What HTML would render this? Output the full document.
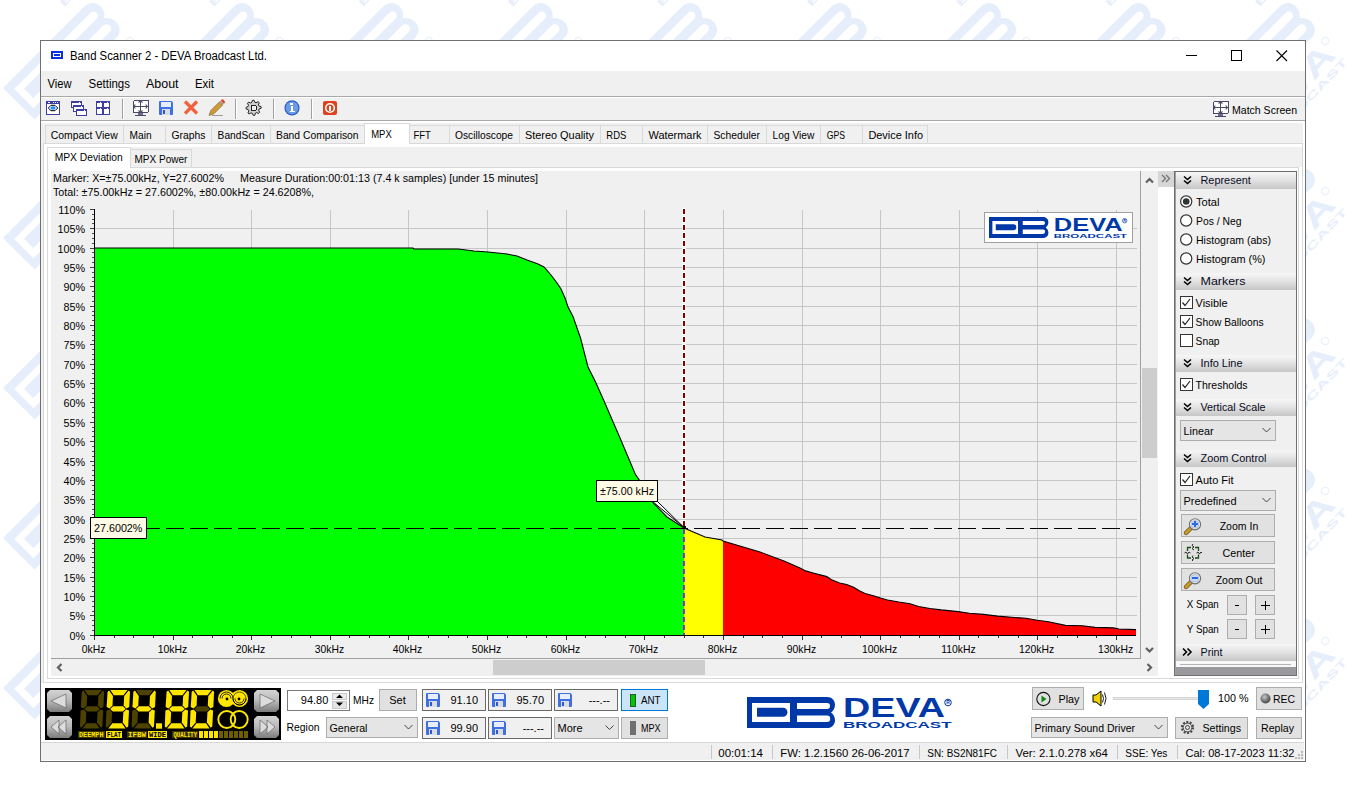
<!DOCTYPE html>
<html><head><meta charset="utf-8"><style>
html,body{margin:0;padding:0;width:1346px;height:802px;overflow:hidden;background:#fff}
svg{display:block;font-family:"Liberation Sans",sans-serif}
rect{shape-rendering:crispEdges}
</style></head><body>
<svg width="1346" height="802" viewBox="0 0 1346 802">
<defs><clipPath id="wmclip"><rect x="0" y="0" width="1346" height="720"/></clipPath><g id="wm"><path transform="translate(3,88) rotate(-45) scale(1.44)" fill-rule="evenodd" fill="#e6eefb" d="M0,0 H80 C85,0 88,3.5 88,7.8 C88,11.5 86,14 84,15.5 C86,17 88,19.5 88,23.2 C88,27.5 85,31 80,31 H0 Z M5,6 H43 V25 H5 Z M10,10.7 H36 A4.5,4.5 0 0 1 36,19.7 H10 Z M50,6 H80 A3,3 0 0 1 80,12 H50 Z M50,18.6 H80 A3.2,3.2 0 0 1 80,25 H50 Z"/><g transform="translate(130,41) rotate(-47)"><text x="-3" y="19" font-size="32" font-weight="bold" fill="#e6eefb" text-anchor="end" textLength="128" lengthAdjust="spacingAndGlyphs">DEVA</text><text x="0" y="31" font-size="10" font-weight="bold" fill="#e6eefb" text-anchor="end" textLength="130" lengthAdjust="spacingAndGlyphs">BROADCAST</text><circle cx="0" cy="0" r="3.6" fill="none" stroke="#e6eefb" stroke-width="1"/></g></g></defs>
<g clip-path="url(#wmclip)">
<use href="#wm" x="-149.4" y="-150"/>
<use href="#wm" x="0.0" y="-150"/>
<use href="#wm" x="149.4" y="-150"/>
<use href="#wm" x="298.8" y="-150"/>
<use href="#wm" x="448.2" y="-150"/>
<use href="#wm" x="597.6" y="-150"/>
<use href="#wm" x="747.0" y="-150"/>
<use href="#wm" x="896.4" y="-150"/>
<use href="#wm" x="1045.8" y="-150"/>
<use href="#wm" x="1195.2" y="-150"/>
<use href="#wm" x="1344.6" y="-150"/>
<use href="#wm" x="-149.4" y="0"/>
<use href="#wm" x="0.0" y="0"/>
<use href="#wm" x="149.4" y="0"/>
<use href="#wm" x="298.8" y="0"/>
<use href="#wm" x="448.2" y="0"/>
<use href="#wm" x="597.6" y="0"/>
<use href="#wm" x="747.0" y="0"/>
<use href="#wm" x="896.4" y="0"/>
<use href="#wm" x="1045.8" y="0"/>
<use href="#wm" x="1195.2" y="0"/>
<use href="#wm" x="1344.6" y="0"/>
<use href="#wm" x="-149.4" y="150"/>
<use href="#wm" x="0.0" y="150"/>
<use href="#wm" x="149.4" y="150"/>
<use href="#wm" x="298.8" y="150"/>
<use href="#wm" x="448.2" y="150"/>
<use href="#wm" x="597.6" y="150"/>
<use href="#wm" x="747.0" y="150"/>
<use href="#wm" x="896.4" y="150"/>
<use href="#wm" x="1045.8" y="150"/>
<use href="#wm" x="1195.2" y="150"/>
<use href="#wm" x="1344.6" y="150"/>
<use href="#wm" x="-149.4" y="300"/>
<use href="#wm" x="0.0" y="300"/>
<use href="#wm" x="149.4" y="300"/>
<use href="#wm" x="298.8" y="300"/>
<use href="#wm" x="448.2" y="300"/>
<use href="#wm" x="597.6" y="300"/>
<use href="#wm" x="747.0" y="300"/>
<use href="#wm" x="896.4" y="300"/>
<use href="#wm" x="1045.8" y="300"/>
<use href="#wm" x="1195.2" y="300"/>
<use href="#wm" x="1344.6" y="300"/>
<use href="#wm" x="-149.4" y="450"/>
<use href="#wm" x="0.0" y="450"/>
<use href="#wm" x="149.4" y="450"/>
<use href="#wm" x="298.8" y="450"/>
<use href="#wm" x="448.2" y="450"/>
<use href="#wm" x="597.6" y="450"/>
<use href="#wm" x="747.0" y="450"/>
<use href="#wm" x="896.4" y="450"/>
<use href="#wm" x="1045.8" y="450"/>
<use href="#wm" x="1195.2" y="450"/>
<use href="#wm" x="1344.6" y="450"/>
<use href="#wm" x="-149.4" y="600"/>
<use href="#wm" x="0.0" y="600"/>
<use href="#wm" x="149.4" y="600"/>
<use href="#wm" x="298.8" y="600"/>
<use href="#wm" x="448.2" y="600"/>
<use href="#wm" x="597.6" y="600"/>
<use href="#wm" x="747.0" y="600"/>
<use href="#wm" x="896.4" y="600"/>
<use href="#wm" x="1045.8" y="600"/>
<use href="#wm" x="1195.2" y="600"/>
<use href="#wm" x="1344.6" y="600"/>
<use href="#wm" x="-149.4" y="750"/>
<use href="#wm" x="0.0" y="750"/>
<use href="#wm" x="149.4" y="750"/>
<use href="#wm" x="298.8" y="750"/>
<use href="#wm" x="448.2" y="750"/>
<use href="#wm" x="597.6" y="750"/>
<use href="#wm" x="747.0" y="750"/>
<use href="#wm" x="896.4" y="750"/>
<use href="#wm" x="1045.8" y="750"/>
<use href="#wm" x="1195.2" y="750"/>
<use href="#wm" x="1344.6" y="750"/>
</g>
<rect x="40" y="40" width="1266" height="722" fill="#ffffff" />
<rect x="40" y="40" width="1266" height="1" fill="#707070" />
<rect x="40" y="761" width="1266" height="1" fill="#707070" />
<rect x="40" y="40" width="1" height="722" fill="#707070" />
<rect x="1305" y="40" width="1" height="722" fill="#707070" />
<rect x="51" y="51" width="12" height="8" fill="#0a2fe0" />
<rect x="53" y="53" width="8" height="4" fill="#ffffff" />
<rect x="54" y="54" width="6" height="2" fill="#0a2fe0" />
<text x="70" y="59.5" font-size="12" fill="#000" textLength="197" lengthAdjust="spacingAndGlyphs">Band Scanner 2 - DEVA Broadcast Ltd.</text>
<rect x="1186" y="55" width="11" height="1" fill="#000" />
<rect x="1231" y="50" width="11" height="1" fill="#000" />
<rect x="1231" y="60" width="11" height="1" fill="#000" />
<rect x="1231" y="50" width="1" height="11" fill="#000" />
<rect x="1241" y="50" width="1" height="11" fill="#000" />
<path d="M1276.5,50.5 L1287,61 M1287,50.5 L1276.5,61" stroke="#000" stroke-width="1.1"/>
<rect x="41" y="71" width="1264" height="25" fill="#f0f0f0" />
<text x="47.5" y="88" font-size="12" fill="#000" textLength="24" lengthAdjust="spacingAndGlyphs">View</text>
<text x="88.5" y="88" font-size="12" fill="#000" textLength="41.5" lengthAdjust="spacingAndGlyphs">Settings</text>
<text x="146" y="88" font-size="12" fill="#000" textLength="32.5" lengthAdjust="spacingAndGlyphs">About</text>
<text x="195" y="88" font-size="12" fill="#000" textLength="19" lengthAdjust="spacingAndGlyphs">Exit</text>
<rect x="41" y="96" width="1264" height="1" fill="#a9a9a9" />
<rect x="41" y="97" width="1264" height="1" fill="#ffffff" />
<rect x="41" y="98" width="1264" height="22" fill="#f0f0f0" />
<rect x="41" y="120" width="1264" height="1" fill="#a9a9a9" />
<rect x="41" y="121" width="1264" height="2" fill="#ffffff" />
<rect x="122" y="99" width="1" height="20" fill="#a0a0a0" />
<rect x="123" y="99" width="1" height="20" fill="#ffffff" />
<rect x="235" y="99" width="1" height="20" fill="#a0a0a0" />
<rect x="236" y="99" width="1" height="20" fill="#ffffff" />
<rect x="273" y="99" width="1" height="20" fill="#a0a0a0" />
<rect x="274" y="99" width="1" height="20" fill="#ffffff" />
<rect x="311" y="99" width="1" height="20" fill="#a0a0a0" />
<rect x="312" y="99" width="1" height="20" fill="#ffffff" />
<rect x="46" y="101" width="14" height="14" fill="#fff" />
<rect x="46" y="101" width="14" height="1" fill="#3d3da6" />
<rect x="46" y="114" width="14" height="1" fill="#3d3da6" />
<rect x="46" y="101" width="1" height="14" fill="#3d3da6" />
<rect x="59" y="101" width="1" height="14" fill="#3d3da6" />
<rect x="46" y="101" width="14" height="3" fill="#3d3da6" />
<rect x="48" y="102" width="2" height="1" fill="#fff" />
<rect x="53" y="102" width="1" height="1" fill="#fff" />
<rect x="55" y="102" width="1" height="1" fill="#fff" />
<rect x="57" y="102" width="1" height="1" fill="#fff" />
<path d="M48.3,108 L51,105.3 L55,105.3 L57.7,108 L55,110.7 L51,110.7 Z" fill="#fff" stroke="#000" stroke-width="1"/>
<ellipse cx="53" cy="108" rx="2.6" ry="1.8" fill="#1a8cff"/>
<rect x="71" y="101" width="11" height="7" fill="#fff" />
<rect x="71" y="101" width="11" height="1" fill="#3d3da6" />
<rect x="71" y="107" width="11" height="1" fill="#3d3da6" />
<rect x="71" y="101" width="1" height="7" fill="#3d3da6" />
<rect x="81" y="101" width="1" height="7" fill="#3d3da6" />
<rect x="71" y="101" width="11" height="2" fill="#3d3da6" />
<rect x="79" y="102" width="1" height="1" fill="#fff" />
<rect x="73" y="105" width="11" height="7" fill="#fff" />
<rect x="73" y="105" width="11" height="1" fill="#3d3da6" />
<rect x="73" y="111" width="11" height="1" fill="#3d3da6" />
<rect x="73" y="105" width="1" height="7" fill="#3d3da6" />
<rect x="83" y="105" width="1" height="7" fill="#3d3da6" />
<rect x="73" y="105" width="11" height="2" fill="#3d3da6" />
<rect x="81" y="106" width="1" height="1" fill="#fff" />
<rect x="76" y="109" width="11" height="7" fill="#fff" />
<rect x="76" y="109" width="11" height="1" fill="#3d3da6" />
<rect x="76" y="115" width="11" height="1" fill="#3d3da6" />
<rect x="76" y="109" width="1" height="7" fill="#3d3da6" />
<rect x="86" y="109" width="1" height="7" fill="#3d3da6" />
<rect x="76" y="109" width="11" height="2" fill="#3d3da6" />
<rect x="84" y="110" width="1" height="1" fill="#fff" />
<rect x="96" y="101" width="14" height="14" fill="#fff" />
<rect x="96" y="101" width="14" height="1" fill="#3d3da6" />
<rect x="96" y="114" width="14" height="1" fill="#3d3da6" />
<rect x="96" y="101" width="1" height="14" fill="#3d3da6" />
<rect x="109" y="101" width="1" height="14" fill="#3d3da6" />
<rect x="102" y="101" width="2" height="14" fill="#3d3da6" />
<rect x="96" y="107" width="14" height="2" fill="#3d3da6" />
<rect x="96" y="101" width="14" height="2" fill="#3d3da6" />
<rect x="100" y="102" width="1" height="1" fill="#fff" />
<rect x="107" y="102" width="1" height="1" fill="#fff" />
<rect x="100" y="108" width="1" height="1" fill="#fff" />
<rect x="107" y="108" width="1" height="1" fill="#fff" />
<rect x="133.5" y="100.5" width="15" height="12" rx="1.5" fill="#fff" stroke="#4a4a66" stroke-width="1"/>
<rect x="140" y="101" width="1" height="12" fill="#4a4a66" />
<rect x="134" y="106" width="14" height="1" fill="#4a4a66" />
<path d="M138.5,102.5 L140.5,100.8 L142.5,102.5 M138.5,110.5 L140.5,112.2 L142.5,110.5 M135.3,104.5 L133.8,106.5 L135.3,108.5 M145.7,104.5 L147.2,106.5 L145.7,108.5" fill="none" stroke="#4a4a66" stroke-width="1.1"/>
<rect x="138" y="113" width="5" height="2" fill="#6a6a90" />
<rect x="135" y="115" width="11" height="1" fill="#4a4a66" />
<path d="M159,102 q0,-1 1,-1 h11.5 l1.5,1.5 v11.5 q0,1 -1,1 h-12 q-1,0 -1,-1 z" fill="#3f6fe0"/>
<rect x="161" y="102" width="10" height="5" fill="#e6eeff" />
<rect x="162" y="109" width="8" height="6" fill="#d8dce4" />
<rect x="163" y="110" width="2" height="4" fill="#3058c8" />
<path d="M185,101.5 L197,113.5 M197,101.5 L185,113.5" stroke="#f4603c" stroke-width="3.2"/>
<path d="M209,115.5 L210.8,110.5 L219.5,101.8 L222.7,105 L214,113.7 Z" fill="#cf9a3a" stroke="#7a5a20" stroke-width="0.6"/>
<path d="M219.5,101.8 L222.7,105 L224,103.7 L220.8,100.5 Z" fill="#a0a0a0"/>
<path d="M220.8,100.5 L224,103.7 L225,102.5 Q224.5,99.5 222,99.3 Z" fill="#e8402a"/>
<rect x="212" y="115" width="11" height="1" fill="#9a9a9a" />
<polygon points="261.12,106.68 261.19,108.17 259.03,109.16 258.66,110.19 259.70,112.33 258.70,113.43 256.48,112.60 255.49,113.07 254.72,115.32 253.23,115.39 252.24,113.23 251.21,112.86 249.07,113.90 247.97,112.90 248.80,110.68 248.33,109.69 246.08,108.92 246.01,107.43 248.17,106.44 248.54,105.41 247.50,103.27 248.50,102.17 250.72,103.00 251.71,102.53 252.48,100.28 253.97,100.21 254.96,102.37 255.99,102.74 258.13,101.70 259.23,102.70 258.40,104.92 258.87,105.91" fill="#d0d0d0" stroke="#222" stroke-width="1"/>
<rect x="251.1" y="105.3" width="5" height="5" rx="1" fill="#f0f0f0" stroke="#222" stroke-width="1"/>
<circle cx="292" cy="107.8" r="7.6" fill="#2b5fc8"/><circle cx="292" cy="107.8" r="6.4" fill="#6b9ae6"/>
<rect x="290" y="103" width="3" height="2" fill="#fff" />
<rect x="290.5" y="106" width="2.5" height="5" fill="#fff" />
<rect x="289.5" y="110.5" width="5" height="1.5" fill="#fff" />
<rect x="323" y="101" width="14" height="14" rx="2" fill="#e0401e" style="shape-rendering:auto"/>
<circle cx="330" cy="108" r="4.3" fill="none" stroke="#fff" stroke-width="1.6"/>
<rect x="329" y="105.5" width="2" height="5" fill="#fff" />
<rect x="1213.5" y="101.5" width="15" height="12" rx="1.5" fill="#fff" stroke="#4a4a66" stroke-width="1"/>
<rect x="1220" y="102" width="1" height="12" fill="#4a4a66" />
<rect x="1214" y="107" width="14" height="1" fill="#4a4a66" />
<path d="M1218.5,103.5 L1220.5,101.8 L1222.5,103.5 M1218.5,111.5 L1220.5,113.2 L1222.5,111.5 M1215.3,105.5 L1213.8,107.5 L1215.3,109.5 M1225.7,105.5 L1227.2,107.5 L1225.7,109.5" fill="none" stroke="#4a4a66" stroke-width="1.1"/>
<rect x="1218" y="114" width="5" height="2" fill="#6a6a90" />
<rect x="1215" y="116" width="11" height="1" fill="#4a4a66" />
<text x="1232" y="113.5" font-size="11" fill="#000" textLength="65" lengthAdjust="spacingAndGlyphs">Match Screen</text>
<rect x="41" y="123" width="1264" height="620" fill="#f0f0f0" />
<rect x="1303" y="123" width="2" height="620" fill="#ffffff" />
<rect x="43" y="143" width="1260" height="540" fill="#ffffff" />
<rect x="43" y="143" width="1260" height="1" fill="#d9d9d9" />
<rect x="43" y="682" width="1260" height="1" fill="#d9d9d9" />
<rect x="43" y="143" width="1" height="540" fill="#d9d9d9" />
<rect x="1302" y="143" width="1" height="540" fill="#d9d9d9" />
<rect x="45" y="125" width="79" height="19" fill="#f0f0f0" />
<rect x="45" y="125" width="79" height="1" fill="#d9d9d9" />
<rect x="45" y="143" width="79" height="1" fill="#d9d9d9" />
<rect x="45" y="125" width="1" height="19" fill="#d9d9d9" />
<rect x="123" y="125" width="1" height="19" fill="#d9d9d9" />
<rect x="123" y="125" width="43" height="19" fill="#f0f0f0" />
<rect x="123" y="125" width="43" height="1" fill="#d9d9d9" />
<rect x="123" y="143" width="43" height="1" fill="#d9d9d9" />
<rect x="123" y="125" width="1" height="19" fill="#d9d9d9" />
<rect x="165" y="125" width="1" height="19" fill="#d9d9d9" />
<rect x="165" y="125" width="47" height="19" fill="#f0f0f0" />
<rect x="165" y="125" width="47" height="1" fill="#d9d9d9" />
<rect x="165" y="143" width="47" height="1" fill="#d9d9d9" />
<rect x="165" y="125" width="1" height="19" fill="#d9d9d9" />
<rect x="211" y="125" width="1" height="19" fill="#d9d9d9" />
<rect x="211" y="125" width="60" height="19" fill="#f0f0f0" />
<rect x="211" y="125" width="60" height="1" fill="#d9d9d9" />
<rect x="211" y="143" width="60" height="1" fill="#d9d9d9" />
<rect x="211" y="125" width="1" height="19" fill="#d9d9d9" />
<rect x="270" y="125" width="1" height="19" fill="#d9d9d9" />
<rect x="270" y="125" width="95" height="19" fill="#f0f0f0" />
<rect x="270" y="125" width="95" height="1" fill="#d9d9d9" />
<rect x="270" y="143" width="95" height="1" fill="#d9d9d9" />
<rect x="270" y="125" width="1" height="19" fill="#d9d9d9" />
<rect x="364" y="125" width="1" height="19" fill="#d9d9d9" />
<rect x="409" y="125" width="41" height="19" fill="#f0f0f0" />
<rect x="409" y="125" width="41" height="1" fill="#d9d9d9" />
<rect x="409" y="143" width="41" height="1" fill="#d9d9d9" />
<rect x="409" y="125" width="1" height="19" fill="#d9d9d9" />
<rect x="449" y="125" width="1" height="19" fill="#d9d9d9" />
<rect x="449" y="125" width="71" height="19" fill="#f0f0f0" />
<rect x="449" y="125" width="71" height="1" fill="#d9d9d9" />
<rect x="449" y="143" width="71" height="1" fill="#d9d9d9" />
<rect x="449" y="125" width="1" height="19" fill="#d9d9d9" />
<rect x="519" y="125" width="1" height="19" fill="#d9d9d9" />
<rect x="519" y="125" width="82" height="19" fill="#f0f0f0" />
<rect x="519" y="125" width="82" height="1" fill="#d9d9d9" />
<rect x="519" y="143" width="82" height="1" fill="#d9d9d9" />
<rect x="519" y="125" width="1" height="19" fill="#d9d9d9" />
<rect x="600" y="125" width="1" height="19" fill="#d9d9d9" />
<rect x="600" y="125" width="43" height="19" fill="#f0f0f0" />
<rect x="600" y="125" width="43" height="1" fill="#d9d9d9" />
<rect x="600" y="143" width="43" height="1" fill="#d9d9d9" />
<rect x="600" y="125" width="1" height="19" fill="#d9d9d9" />
<rect x="642" y="125" width="1" height="19" fill="#d9d9d9" />
<rect x="642" y="125" width="66" height="19" fill="#f0f0f0" />
<rect x="642" y="125" width="66" height="1" fill="#d9d9d9" />
<rect x="642" y="143" width="66" height="1" fill="#d9d9d9" />
<rect x="642" y="125" width="1" height="19" fill="#d9d9d9" />
<rect x="707" y="125" width="1" height="19" fill="#d9d9d9" />
<rect x="707" y="125" width="60" height="19" fill="#f0f0f0" />
<rect x="707" y="125" width="60" height="1" fill="#d9d9d9" />
<rect x="707" y="143" width="60" height="1" fill="#d9d9d9" />
<rect x="707" y="125" width="1" height="19" fill="#d9d9d9" />
<rect x="766" y="125" width="1" height="19" fill="#d9d9d9" />
<rect x="766" y="125" width="55" height="19" fill="#f0f0f0" />
<rect x="766" y="125" width="55" height="1" fill="#d9d9d9" />
<rect x="766" y="143" width="55" height="1" fill="#d9d9d9" />
<rect x="766" y="125" width="1" height="19" fill="#d9d9d9" />
<rect x="820" y="125" width="1" height="19" fill="#d9d9d9" />
<rect x="820" y="125" width="43" height="19" fill="#f0f0f0" />
<rect x="820" y="125" width="43" height="1" fill="#d9d9d9" />
<rect x="820" y="143" width="43" height="1" fill="#d9d9d9" />
<rect x="820" y="125" width="1" height="19" fill="#d9d9d9" />
<rect x="862" y="125" width="1" height="19" fill="#d9d9d9" />
<rect x="862" y="125" width="66" height="19" fill="#f0f0f0" />
<rect x="862" y="125" width="66" height="1" fill="#d9d9d9" />
<rect x="862" y="143" width="66" height="1" fill="#d9d9d9" />
<rect x="862" y="125" width="1" height="19" fill="#d9d9d9" />
<rect x="927" y="125" width="1" height="19" fill="#d9d9d9" />
<text x="50.7" y="139" font-size="11" fill="#000" textLength="67" lengthAdjust="spacingAndGlyphs">Compact View</text>
<text x="129.6" y="139" font-size="11" fill="#000" textLength="22" lengthAdjust="spacingAndGlyphs">Main</text>
<text x="171.5" y="139" font-size="11" fill="#000" textLength="34" lengthAdjust="spacingAndGlyphs">Graphs</text>
<text x="217.6" y="139" font-size="11" fill="#000" textLength="47" lengthAdjust="spacingAndGlyphs">BandScan</text>
<text x="276" y="139" font-size="11" fill="#000" textLength="82.6" lengthAdjust="spacingAndGlyphs">Band Comparison</text>
<rect x="364" y="123" width="46" height="21" fill="#ffffff" />
<rect x="364" y="123" width="46" height="1" fill="#d9d9d9" />
<rect x="364" y="143" width="46" height="1" fill="#d9d9d9" />
<rect x="364" y="123" width="1" height="21" fill="#d9d9d9" />
<rect x="409" y="123" width="1" height="21" fill="#d9d9d9" />
<rect x="365" y="143" width="44" height="1" fill="#ffffff" />
<text x="371.2" y="137.5" font-size="11" fill="#000" textLength="20.5" lengthAdjust="spacingAndGlyphs">MPX</text>
<text x="413.5" y="139" font-size="11" fill="#000" textLength="17.4" lengthAdjust="spacingAndGlyphs">FFT</text>
<text x="455" y="139" font-size="11" fill="#000" textLength="58" lengthAdjust="spacingAndGlyphs">Oscilloscope</text>
<text x="525" y="139" font-size="11" fill="#000" textLength="69" lengthAdjust="spacingAndGlyphs">Stereo Quality</text>
<text x="606.3" y="139" font-size="11" fill="#000" textLength="20" lengthAdjust="spacingAndGlyphs">RDS</text>
<text x="648.5" y="139" font-size="11" fill="#000" textLength="53" lengthAdjust="spacingAndGlyphs">Watermark</text>
<text x="713.5" y="139" font-size="11" fill="#000" textLength="46.4" lengthAdjust="spacingAndGlyphs">Scheduler</text>
<text x="772.6" y="139" font-size="11" fill="#000" textLength="41.7" lengthAdjust="spacingAndGlyphs">Log View</text>
<text x="826.8" y="139" font-size="11" fill="#000" textLength="18.3" lengthAdjust="spacingAndGlyphs">GPS</text>
<text x="868.4" y="139" font-size="11" fill="#000" textLength="54.6" lengthAdjust="spacingAndGlyphs">Device Info</text>
<rect x="47" y="147" width="1255" height="20" fill="#f0f0f0" />
<rect x="47" y="167" width="1252" height="512" fill="#ffffff" />
<rect x="47" y="167" width="1252" height="1" fill="#d9d9d9" />
<rect x="47" y="678" width="1252" height="1" fill="#d9d9d9" />
<rect x="47" y="167" width="1" height="512" fill="#d9d9d9" />
<rect x="1298" y="167" width="1" height="512" fill="#d9d9d9" />
<rect x="47" y="147" width="84" height="21" fill="#ffffff" />
<rect x="47" y="147" width="84" height="1" fill="#d9d9d9" />
<rect x="47" y="167" width="84" height="1" fill="#d9d9d9" />
<rect x="47" y="147" width="1" height="21" fill="#d9d9d9" />
<rect x="130" y="147" width="1" height="21" fill="#d9d9d9" />
<rect x="48" y="167" width="82" height="1" fill="#ffffff" />
<rect x="130" y="149" width="62" height="19" fill="#f0f0f0" />
<rect x="130" y="149" width="62" height="1" fill="#d9d9d9" />
<rect x="130" y="167" width="62" height="1" fill="#d9d9d9" />
<rect x="130" y="149" width="1" height="19" fill="#d9d9d9" />
<rect x="191" y="149" width="1" height="19" fill="#d9d9d9" />
<text x="54.7" y="160.7" font-size="11" fill="#000" textLength="68" lengthAdjust="spacingAndGlyphs">MPX Deviation</text>
<text x="134.4" y="163" font-size="11" fill="#000" textLength="53" lengthAdjust="spacingAndGlyphs">MPX Power</text>
<rect x="51" y="171" width="1090" height="488" fill="#f0f0f0" />
<rect x="1140" y="171" width="1" height="488" fill="#a0a0a0" />
<rect x="51" y="658" width="1090" height="1" fill="#a0a0a0" />
<text x="53" y="182" font-size="10.7" fill="#000" textLength="171" lengthAdjust="spacingAndGlyphs">Marker: X=±75.00kHz, Y=27.6002%</text>
<text x="240" y="182" font-size="10.7" fill="#000" textLength="298" lengthAdjust="spacingAndGlyphs">Measure Duration:00:01:13 (7.4 k samples) [under 15 minutes]</text>
<text x="53" y="196" font-size="10.7" fill="#000" textLength="261" lengthAdjust="spacingAndGlyphs">Total: ±75.00kHz = 27.6002%, ±80.00kHz = 24.6208%,</text>
<rect x="173" y="210" width="1" height="425" fill="#c6c6c6" />
<rect x="251" y="210" width="1" height="425" fill="#c6c6c6" />
<rect x="330" y="210" width="1" height="425" fill="#c6c6c6" />
<rect x="408" y="210" width="1" height="425" fill="#c6c6c6" />
<rect x="487" y="210" width="1" height="425" fill="#c6c6c6" />
<rect x="566" y="210" width="1" height="425" fill="#c6c6c6" />
<rect x="644" y="210" width="1" height="425" fill="#c6c6c6" />
<rect x="723" y="210" width="1" height="425" fill="#c6c6c6" />
<rect x="802" y="210" width="1" height="425" fill="#c6c6c6" />
<rect x="880" y="210" width="1" height="425" fill="#c6c6c6" />
<rect x="959" y="210" width="1" height="425" fill="#c6c6c6" />
<rect x="1037" y="210" width="1" height="425" fill="#c6c6c6" />
<rect x="1116" y="210" width="1" height="425" fill="#c6c6c6" />
<rect x="95" y="615" width="1042" height="1" fill="#c6c6c6" />
<rect x="95" y="596" width="1042" height="1" fill="#c6c6c6" />
<rect x="95" y="577" width="1042" height="1" fill="#c6c6c6" />
<rect x="95" y="557" width="1042" height="1" fill="#c6c6c6" />
<rect x="95" y="538" width="1042" height="1" fill="#c6c6c6" />
<rect x="95" y="519" width="1042" height="1" fill="#c6c6c6" />
<rect x="95" y="499" width="1042" height="1" fill="#c6c6c6" />
<rect x="95" y="480" width="1042" height="1" fill="#c6c6c6" />
<rect x="95" y="461" width="1042" height="1" fill="#c6c6c6" />
<rect x="95" y="441" width="1042" height="1" fill="#c6c6c6" />
<rect x="95" y="422" width="1042" height="1" fill="#c6c6c6" />
<rect x="95" y="402" width="1042" height="1" fill="#c6c6c6" />
<rect x="95" y="383" width="1042" height="1" fill="#c6c6c6" />
<rect x="95" y="364" width="1042" height="1" fill="#c6c6c6" />
<rect x="95" y="344" width="1042" height="1" fill="#c6c6c6" />
<rect x="95" y="325" width="1042" height="1" fill="#c6c6c6" />
<rect x="95" y="306" width="1042" height="1" fill="#c6c6c6" />
<rect x="95" y="286" width="1042" height="1" fill="#c6c6c6" />
<rect x="95" y="267" width="1042" height="1" fill="#c6c6c6" />
<rect x="95" y="248" width="1042" height="1" fill="#c6c6c6" />
<rect x="95" y="228" width="1042" height="1" fill="#c6c6c6" />
<path d="M95,635 L95.0,248.0 L413.0,248.0 L414.0,249.0 L458.0,249.0 L474.0,251.0 L488.0,252.0 L507.0,254.0 L517.0,256.0 L527.0,260.0 L538.0,264.0 L544.0,267.0 L551.0,275.0 L557.0,283.0 L561.0,289.0 L565.0,298.0 L568.0,307.0 L573.0,316.5 L577.0,328.0 L580.5,338.0 L588.0,367.0 L596.0,383.0 L604.0,401.0 L612.0,419.5 L620.0,438.0 L627.6,456.0 L635.5,474.6 L640.0,481.0 L646.0,492.0 L653.8,503.4 L667.0,517.0 L684.0,528.0 L684,635 Z" fill="#00ff00"/>
<path d="M684,635 L684.0,528.0 L705.0,537.0 L722.0,540.0 L723.0,541.0 L723,635 Z" fill="#ffff00"/>
<path d="M723,635 L723.0,541.0 L760.0,552.0 L784.0,561.0 L800.0,568.1 L805.6,570.9 L814.0,573.2 L821.0,575.1 L826.8,576.6 L831.0,579.4 L839.5,583.0 L846.6,584.5 L853.6,587.3 L859.3,590.7 L865.0,593.5 L873.4,595.8 L880.5,598.0 L887.5,600.0 L898.8,602.0 L910.0,603.7 L918.6,606.5 L929.9,608.5 L941.2,609.9 L958.0,611.6 L969.4,613.3 L983.5,614.4 L997.6,616.1 L1014.6,617.5 L1025.9,618.3 L1037.2,620.3 L1048.4,621.7 L1065.4,625.4 L1082.3,625.7 L1095.0,627.4 L1113.4,627.9 L1119.0,629.0 L1136.0,629.6 L1136,635 Z" fill="#ff0000"/>
<path d="M95.0,248.0 L413.0,248.0 L414.0,249.0 L458.0,249.0 L474.0,251.0 L488.0,252.0 L507.0,254.0 L517.0,256.0 L527.0,260.0 L538.0,264.0 L544.0,267.0 L551.0,275.0 L557.0,283.0 L561.0,289.0 L565.0,298.0 L568.0,307.0 L573.0,316.5 L577.0,328.0 L580.5,338.0 L588.0,367.0 L596.0,383.0 L604.0,401.0 L612.0,419.5 L620.0,438.0 L627.6,456.0 L635.5,474.6 L640.0,481.0 L646.0,492.0 L653.8,503.4 L667.0,517.0 L684.0,528.0 L705.0,537.0 L722.0,540.0 L723.0,541.0 L760.0,552.0 L784.0,561.0 L800.0,568.1 L805.6,570.9 L814.0,573.2 L821.0,575.1 L826.8,576.6 L831.0,579.4 L839.5,583.0 L846.6,584.5 L853.6,587.3 L859.3,590.7 L865.0,593.5 L873.4,595.8 L880.5,598.0 L887.5,600.0 L898.8,602.0 L910.0,603.7 L918.6,606.5 L929.9,608.5 L941.2,609.9 L958.0,611.6 L969.4,613.3 L983.5,614.4 L997.6,616.1 L1014.6,617.5 L1025.9,618.3 L1037.2,620.3 L1048.4,621.7 L1065.4,625.4 L1082.3,625.7 L1095.0,627.4 L1113.4,627.9 L1119.0,629.0 L1136.0,629.6" fill="none" stroke="#000" stroke-width="1.1"/>
<rect x="94" y="209" width="1" height="427" fill="#000" />
<rect x="94" y="635" width="1042" height="1" fill="#000" />
<rect x="90" y="635" width="4" height="1" fill="#404040" />
<rect x="92" y="630" width="2" height="1" fill="#505050" />
<rect x="92" y="625" width="2" height="1" fill="#505050" />
<rect x="92" y="620" width="2" height="1" fill="#505050" />
<rect x="90" y="615" width="4" height="1" fill="#404040" />
<rect x="92" y="611" width="2" height="1" fill="#505050" />
<rect x="92" y="606" width="2" height="1" fill="#505050" />
<rect x="92" y="601" width="2" height="1" fill="#505050" />
<rect x="90" y="596" width="4" height="1" fill="#404040" />
<rect x="92" y="591" width="2" height="1" fill="#505050" />
<rect x="92" y="586" width="2" height="1" fill="#505050" />
<rect x="92" y="581" width="2" height="1" fill="#505050" />
<rect x="90" y="577" width="4" height="1" fill="#404040" />
<rect x="92" y="572" width="2" height="1" fill="#505050" />
<rect x="92" y="567" width="2" height="1" fill="#505050" />
<rect x="92" y="562" width="2" height="1" fill="#505050" />
<rect x="90" y="557" width="4" height="1" fill="#404040" />
<rect x="92" y="552" width="2" height="1" fill="#505050" />
<rect x="92" y="548" width="2" height="1" fill="#505050" />
<rect x="92" y="543" width="2" height="1" fill="#505050" />
<rect x="90" y="538" width="4" height="1" fill="#404040" />
<rect x="92" y="533" width="2" height="1" fill="#505050" />
<rect x="92" y="528" width="2" height="1" fill="#505050" />
<rect x="92" y="523" width="2" height="1" fill="#505050" />
<rect x="90" y="519" width="4" height="1" fill="#404040" />
<rect x="92" y="514" width="2" height="1" fill="#505050" />
<rect x="92" y="509" width="2" height="1" fill="#505050" />
<rect x="92" y="504" width="2" height="1" fill="#505050" />
<rect x="90" y="499" width="4" height="1" fill="#404040" />
<rect x="92" y="494" width="2" height="1" fill="#505050" />
<rect x="92" y="490" width="2" height="1" fill="#505050" />
<rect x="92" y="485" width="2" height="1" fill="#505050" />
<rect x="90" y="480" width="4" height="1" fill="#404040" />
<rect x="92" y="475" width="2" height="1" fill="#505050" />
<rect x="92" y="470" width="2" height="1" fill="#505050" />
<rect x="92" y="465" width="2" height="1" fill="#505050" />
<rect x="90" y="461" width="4" height="1" fill="#404040" />
<rect x="92" y="456" width="2" height="1" fill="#505050" />
<rect x="92" y="451" width="2" height="1" fill="#505050" />
<rect x="92" y="446" width="2" height="1" fill="#505050" />
<rect x="90" y="441" width="4" height="1" fill="#404040" />
<rect x="92" y="436" width="2" height="1" fill="#505050" />
<rect x="92" y="431" width="2" height="1" fill="#505050" />
<rect x="92" y="427" width="2" height="1" fill="#505050" />
<rect x="90" y="422" width="4" height="1" fill="#404040" />
<rect x="92" y="417" width="2" height="1" fill="#505050" />
<rect x="92" y="412" width="2" height="1" fill="#505050" />
<rect x="92" y="407" width="2" height="1" fill="#505050" />
<rect x="90" y="402" width="4" height="1" fill="#404040" />
<rect x="92" y="398" width="2" height="1" fill="#505050" />
<rect x="92" y="393" width="2" height="1" fill="#505050" />
<rect x="92" y="388" width="2" height="1" fill="#505050" />
<rect x="90" y="383" width="4" height="1" fill="#404040" />
<rect x="92" y="378" width="2" height="1" fill="#505050" />
<rect x="92" y="373" width="2" height="1" fill="#505050" />
<rect x="92" y="369" width="2" height="1" fill="#505050" />
<rect x="90" y="364" width="4" height="1" fill="#404040" />
<rect x="92" y="359" width="2" height="1" fill="#505050" />
<rect x="92" y="354" width="2" height="1" fill="#505050" />
<rect x="92" y="349" width="2" height="1" fill="#505050" />
<rect x="90" y="344" width="4" height="1" fill="#404040" />
<rect x="92" y="340" width="2" height="1" fill="#505050" />
<rect x="92" y="335" width="2" height="1" fill="#505050" />
<rect x="92" y="330" width="2" height="1" fill="#505050" />
<rect x="90" y="325" width="4" height="1" fill="#404040" />
<rect x="92" y="320" width="2" height="1" fill="#505050" />
<rect x="92" y="315" width="2" height="1" fill="#505050" />
<rect x="92" y="311" width="2" height="1" fill="#505050" />
<rect x="90" y="306" width="4" height="1" fill="#404040" />
<rect x="92" y="301" width="2" height="1" fill="#505050" />
<rect x="92" y="296" width="2" height="1" fill="#505050" />
<rect x="92" y="291" width="2" height="1" fill="#505050" />
<rect x="90" y="286" width="4" height="1" fill="#404040" />
<rect x="92" y="281" width="2" height="1" fill="#505050" />
<rect x="92" y="277" width="2" height="1" fill="#505050" />
<rect x="92" y="272" width="2" height="1" fill="#505050" />
<rect x="90" y="267" width="4" height="1" fill="#404040" />
<rect x="92" y="262" width="2" height="1" fill="#505050" />
<rect x="92" y="257" width="2" height="1" fill="#505050" />
<rect x="92" y="252" width="2" height="1" fill="#505050" />
<rect x="90" y="248" width="4" height="1" fill="#404040" />
<rect x="92" y="243" width="2" height="1" fill="#505050" />
<rect x="92" y="238" width="2" height="1" fill="#505050" />
<rect x="92" y="233" width="2" height="1" fill="#505050" />
<rect x="90" y="228" width="4" height="1" fill="#404040" />
<rect x="92" y="223" width="2" height="1" fill="#505050" />
<rect x="92" y="219" width="2" height="1" fill="#505050" />
<rect x="92" y="214" width="2" height="1" fill="#505050" />
<rect x="90" y="209" width="4" height="1" fill="#404040" />
<text x="85" y="639.7" font-size="10.8" fill="#000" text-anchor="end">0%</text>
<text x="85" y="619.7" font-size="10.8" fill="#000" text-anchor="end">5%</text>
<text x="85" y="600.7" font-size="10.8" fill="#000" text-anchor="end">10%</text>
<text x="85" y="581.7" font-size="10.8" fill="#000" text-anchor="end">15%</text>
<text x="85" y="561.7" font-size="10.8" fill="#000" text-anchor="end">20%</text>
<text x="85" y="542.7" font-size="10.8" fill="#000" text-anchor="end">25%</text>
<text x="85" y="523.7" font-size="10.8" fill="#000" text-anchor="end">30%</text>
<text x="85" y="503.7" font-size="10.8" fill="#000" text-anchor="end">35%</text>
<text x="85" y="484.7" font-size="10.8" fill="#000" text-anchor="end">40%</text>
<text x="85" y="465.7" font-size="10.8" fill="#000" text-anchor="end">45%</text>
<text x="85" y="445.7" font-size="10.8" fill="#000" text-anchor="end">50%</text>
<text x="85" y="426.7" font-size="10.8" fill="#000" text-anchor="end">55%</text>
<text x="85" y="406.7" font-size="10.8" fill="#000" text-anchor="end">60%</text>
<text x="85" y="387.7" font-size="10.8" fill="#000" text-anchor="end">65%</text>
<text x="85" y="368.7" font-size="10.8" fill="#000" text-anchor="end">70%</text>
<text x="85" y="348.7" font-size="10.8" fill="#000" text-anchor="end">75%</text>
<text x="85" y="329.7" font-size="10.8" fill="#000" text-anchor="end">80%</text>
<text x="85" y="310.7" font-size="10.8" fill="#000" text-anchor="end">85%</text>
<text x="85" y="290.7" font-size="10.8" fill="#000" text-anchor="end">90%</text>
<text x="85" y="271.7" font-size="10.8" fill="#000" text-anchor="end">95%</text>
<text x="85" y="252.7" font-size="10.8" fill="#000" text-anchor="end">100%</text>
<text x="85" y="232.7" font-size="10.8" fill="#000" text-anchor="end">105%</text>
<text x="85" y="213.7" font-size="10.8" fill="#000" text-anchor="end">110%</text>
<rect x="94" y="636" width="1" height="4" fill="#303030" />
<rect x="114" y="636" width="1" height="2" fill="#303030" />
<rect x="133" y="636" width="1" height="2" fill="#303030" />
<rect x="153" y="636" width="1" height="2" fill="#303030" />
<rect x="173" y="636" width="1" height="4" fill="#303030" />
<rect x="192" y="636" width="1" height="2" fill="#303030" />
<rect x="212" y="636" width="1" height="2" fill="#303030" />
<rect x="232" y="636" width="1" height="2" fill="#303030" />
<rect x="251" y="636" width="1" height="4" fill="#303030" />
<rect x="271" y="636" width="1" height="2" fill="#303030" />
<rect x="291" y="636" width="1" height="2" fill="#303030" />
<rect x="310" y="636" width="1" height="2" fill="#303030" />
<rect x="330" y="636" width="1" height="4" fill="#303030" />
<rect x="349" y="636" width="1" height="2" fill="#303030" />
<rect x="369" y="636" width="1" height="2" fill="#303030" />
<rect x="389" y="636" width="1" height="2" fill="#303030" />
<rect x="408" y="636" width="1" height="4" fill="#303030" />
<rect x="428" y="636" width="1" height="2" fill="#303030" />
<rect x="448" y="636" width="1" height="2" fill="#303030" />
<rect x="467" y="636" width="1" height="2" fill="#303030" />
<rect x="487" y="636" width="1" height="4" fill="#303030" />
<rect x="507" y="636" width="1" height="2" fill="#303030" />
<rect x="526" y="636" width="1" height="2" fill="#303030" />
<rect x="546" y="636" width="1" height="2" fill="#303030" />
<rect x="566" y="636" width="1" height="4" fill="#303030" />
<rect x="585" y="636" width="1" height="2" fill="#303030" />
<rect x="605" y="636" width="1" height="2" fill="#303030" />
<rect x="625" y="636" width="1" height="2" fill="#303030" />
<rect x="644" y="636" width="1" height="4" fill="#303030" />
<rect x="664" y="636" width="1" height="2" fill="#303030" />
<rect x="684" y="636" width="1" height="2" fill="#303030" />
<rect x="703" y="636" width="1" height="2" fill="#303030" />
<rect x="723" y="636" width="1" height="4" fill="#303030" />
<rect x="743" y="636" width="1" height="2" fill="#303030" />
<rect x="762" y="636" width="1" height="2" fill="#303030" />
<rect x="782" y="636" width="1" height="2" fill="#303030" />
<rect x="802" y="636" width="1" height="4" fill="#303030" />
<rect x="821" y="636" width="1" height="2" fill="#303030" />
<rect x="841" y="636" width="1" height="2" fill="#303030" />
<rect x="860" y="636" width="1" height="2" fill="#303030" />
<rect x="880" y="636" width="1" height="4" fill="#303030" />
<rect x="900" y="636" width="1" height="2" fill="#303030" />
<rect x="919" y="636" width="1" height="2" fill="#303030" />
<rect x="939" y="636" width="1" height="2" fill="#303030" />
<rect x="959" y="636" width="1" height="4" fill="#303030" />
<rect x="978" y="636" width="1" height="2" fill="#303030" />
<rect x="998" y="636" width="1" height="2" fill="#303030" />
<rect x="1018" y="636" width="1" height="2" fill="#303030" />
<rect x="1037" y="636" width="1" height="4" fill="#303030" />
<rect x="1057" y="636" width="1" height="2" fill="#303030" />
<rect x="1077" y="636" width="1" height="2" fill="#303030" />
<rect x="1096" y="636" width="1" height="2" fill="#303030" />
<rect x="1116" y="636" width="1" height="4" fill="#303030" />
<text x="93.5" y="653" font-size="10.4" fill="#000" text-anchor="middle">0kHz</text>
<text x="172.5" y="653" font-size="10.4" fill="#000" text-anchor="middle">10kHz</text>
<text x="250.5" y="653" font-size="10.4" fill="#000" text-anchor="middle">20kHz</text>
<text x="329.5" y="653" font-size="10.4" fill="#000" text-anchor="middle">30kHz</text>
<text x="407.5" y="653" font-size="10.4" fill="#000" text-anchor="middle">40kHz</text>
<text x="486.5" y="653" font-size="10.4" fill="#000" text-anchor="middle">50kHz</text>
<text x="565.5" y="653" font-size="10.4" fill="#000" text-anchor="middle">60kHz</text>
<text x="643.5" y="653" font-size="10.4" fill="#000" text-anchor="middle">70kHz</text>
<text x="722.5" y="653" font-size="10.4" fill="#000" text-anchor="middle">80kHz</text>
<text x="801.5" y="653" font-size="10.4" fill="#000" text-anchor="middle">90kHz</text>
<text x="879.5" y="653" font-size="10.4" fill="#000" text-anchor="middle">100kHz</text>
<text x="958.5" y="653" font-size="10.4" fill="#000" text-anchor="middle">110kHz</text>
<text x="1036.5" y="653" font-size="10.4" fill="#000" text-anchor="middle">120kHz</text>
<text x="1115.5" y="653" font-size="10.4" fill="#000" text-anchor="middle">130kHz</text>
<line x1="94" y1="528.5" x2="1136" y2="528.5" stroke="#000" stroke-width="1" stroke-dasharray="18 6"/>
<line x1="684" y1="208" x2="684" y2="527" stroke="#ffffff" stroke-width="4" stroke-dasharray="7 1"/>
<line x1="684" y1="209" x2="684" y2="527" stroke="#800000" stroke-width="2" stroke-dasharray="5 3"/>
<line x1="684" y1="529" x2="684" y2="635" stroke="#8a2be2" stroke-width="2" stroke-dasharray="5 3"/>
<rect x="683" y="526" width="3" height="3" fill="#000" />
<rect x="90" y="517" width="57" height="22" fill="#fffbe6" />
<rect x="90" y="517" width="57" height="1" fill="#000" />
<rect x="90" y="538" width="57" height="1" fill="#000" />
<rect x="90" y="517" width="1" height="22" fill="#000" />
<rect x="146" y="517" width="1" height="22" fill="#000" />
<text x="94" y="532" font-size="10.7" fill="#000" textLength="48.4" lengthAdjust="spacingAndGlyphs">27.6002%</text>
<path d="M652.5,501.5 L684,527.5 L657.5,501.5" fill="#fff" stroke="#000" stroke-width="1"/>
<rect x="596" y="480" width="62" height="22" fill="#fffbe6" />
<rect x="596" y="480" width="62" height="1" fill="#000" />
<rect x="596" y="501" width="62" height="1" fill="#000" />
<rect x="596" y="480" width="1" height="22" fill="#000" />
<rect x="657" y="480" width="1" height="22" fill="#000" />
<text x="600" y="495" font-size="10.8" fill="#000" textLength="54" lengthAdjust="spacingAndGlyphs">±75.00 kHz</text>
<rect x="984" y="212" width="149" height="31" fill="#ffffff" />
<rect x="984" y="212" width="149" height="1" fill="#a0a0a0" />
<rect x="984" y="242" width="149" height="1" fill="#a0a0a0" />
<rect x="984" y="212" width="1" height="31" fill="#a0a0a0" />
<rect x="1132" y="212" width="1" height="31" fill="#a0a0a0" />
<rect x="1141" y="171" width="17" height="488" fill="#f0f0f0" />
<rect x="1142" y="368" width="15" height="90" fill="#cdcdcd" />
<path d="M1146,182.5 L1149.5,179 L1153,182.5" fill="none" stroke="#606060" stroke-width="2.2"/>
<path d="M1146,648 L1149.5,651.5 L1153,648" fill="none" stroke="#606060" stroke-width="2.2"/>
<rect x="51" y="659" width="1107" height="17" fill="#f0f0f0" />
<rect x="493" y="660" width="212" height="15" fill="#cdcdcd" />
<path d="M61.5,664 L58,667.5 L61.5,671" fill="none" stroke="#606060" stroke-width="2.2"/>
<path d="M1147.5,664 L1151,667.5 L1147.5,671" fill="none" stroke="#606060" stroke-width="2.2"/>
<rect x="1158" y="171" width="16" height="16" fill="#d6d6d6" />
<path d="M1162,175 L1165.5,178.5 L1162,182 M1166,175 L1169.5,178.5 L1166,182" fill="none" stroke="#777" stroke-width="1.4"/>
<rect x="1158" y="187" width="16" height="491" fill="#ffffff" />
<rect x="1174" y="171" width="123" height="505" fill="#f0f0f0" />
<rect x="1174" y="171" width="1" height="505" fill="#6e6e6e" />
<rect x="1175" y="171" width="1" height="505" fill="#a0a0a0" />
<rect x="1174" y="171" width="123" height="1" fill="#6e6e6e" />
<rect x="1296" y="171" width="1" height="505" fill="#6e6e6e" />
<rect x="1174" y="675" width="123" height="1" fill="#6e6e6e" />
<defs><linearGradient id="hg" x1="0" y1="0" x2="0" y2="1"><stop offset="0" stop-color="#f7f7f7"/><stop offset="0.45" stop-color="#e4e4e4"/><stop offset="1" stop-color="#c6c6c6"/></linearGradient><linearGradient id="bg2" x1="0" y1="0" x2="0" y2="1"><stop offset="0" stop-color="#f2f2f2"/><stop offset="1" stop-color="#d8d8d8"/></linearGradient></defs>
<rect x="1176" y="172" width="120" height="17" fill="url(#hg)"/>
<path d="M1184,176.5 L1187.5,179.5 L1191,176.5 M1184,180.5 L1187.5,183.5 L1191,180.5" fill="none" stroke="#000" stroke-width="1.6"/>
<text x="1200.5" y="183.8" font-size="11" fill="#0a0a1e" textLength="50.3" lengthAdjust="spacingAndGlyphs">Represent</text>
<rect x="1176" y="273" width="120" height="17" fill="url(#hg)"/>
<path d="M1184,277.5 L1187.5,280.5 L1191,277.5 M1184,281.5 L1187.5,284.5 L1191,281.5" fill="none" stroke="#000" stroke-width="1.6"/>
<text x="1200.5" y="284.8" font-size="11" fill="#0a0a1e" textLength="45" lengthAdjust="spacingAndGlyphs">Markers</text>
<rect x="1176" y="355" width="120" height="17" fill="url(#hg)"/>
<path d="M1184,359.5 L1187.5,362.5 L1191,359.5 M1184,363.5 L1187.5,366.5 L1191,363.5" fill="none" stroke="#000" stroke-width="1.6"/>
<text x="1200.5" y="366.8" font-size="11" fill="#0a0a1e" textLength="42" lengthAdjust="spacingAndGlyphs">Info Line</text>
<rect x="1176" y="399" width="120" height="17" fill="url(#hg)"/>
<path d="M1184,403.5 L1187.5,406.5 L1191,403.5 M1184,407.5 L1187.5,410.5 L1191,407.5" fill="none" stroke="#000" stroke-width="1.6"/>
<text x="1200.5" y="410.8" font-size="11" fill="#0a0a1e" textLength="65" lengthAdjust="spacingAndGlyphs">Vertical Scale</text>
<rect x="1176" y="450" width="120" height="17" fill="url(#hg)"/>
<path d="M1184,454.5 L1187.5,457.5 L1191,454.5 M1184,458.5 L1187.5,461.5 L1191,458.5" fill="none" stroke="#000" stroke-width="1.6"/>
<text x="1200.5" y="461.8" font-size="11" fill="#0a0a1e" textLength="66" lengthAdjust="spacingAndGlyphs">Zoom Control</text>
<rect x="1176" y="644" width="120" height="17" fill="url(#hg)"/>
<path d="M1183,648.5 L1186.5,652.0 L1183,655.5 M1187.5,648.5 L1191,652.0 L1187.5,655.5" fill="none" stroke="#000" stroke-width="1.6"/>
<text x="1200.5" y="655.8" font-size="11" fill="#0a0a1e" textLength="22" lengthAdjust="spacingAndGlyphs">Print</text>
<circle cx="1186.2" cy="201.5" r="5.6" fill="#fff" stroke="#333" stroke-width="1.2"/>
<circle cx="1186.2" cy="201.5" r="3.3" fill="#333"/>
<text x="1196" y="205.7" font-size="11" fill="#000" textLength="23.5" lengthAdjust="spacingAndGlyphs">Total</text>
<circle cx="1186.2" cy="220.5" r="5.6" fill="#fff" stroke="#333" stroke-width="1.2"/>
<text x="1196" y="224.7" font-size="11" fill="#000" textLength="45.5" lengthAdjust="spacingAndGlyphs">Pos / Neg</text>
<circle cx="1186.2" cy="239.5" r="5.6" fill="#fff" stroke="#333" stroke-width="1.2"/>
<text x="1196" y="243.7" font-size="11" fill="#000" textLength="75" lengthAdjust="spacingAndGlyphs">Histogram (abs)</text>
<circle cx="1186.2" cy="258.5" r="5.6" fill="#fff" stroke="#333" stroke-width="1.2"/>
<text x="1196" y="262.7" font-size="11" fill="#000" textLength="69.5" lengthAdjust="spacingAndGlyphs">Histogram (%)</text>
<rect x="1180" y="296" width="13" height="13" fill="#fff" />
<rect x="1180" y="296" width="13" height="1" fill="#333" />
<rect x="1180" y="308" width="13" height="1" fill="#333" />
<rect x="1180" y="296" width="1" height="13" fill="#333" />
<rect x="1192" y="296" width="1" height="13" fill="#333" />
<path d="M1182.5,302.5 L1185,305.5 L1190,299" fill="none" stroke="#222" stroke-width="1.2"/>
<text x="1195.6" y="306.8" font-size="11" fill="#000" textLength="32" lengthAdjust="spacingAndGlyphs">Visible</text>
<rect x="1180" y="315" width="13" height="13" fill="#fff" />
<rect x="1180" y="315" width="13" height="1" fill="#333" />
<rect x="1180" y="327" width="13" height="1" fill="#333" />
<rect x="1180" y="315" width="1" height="13" fill="#333" />
<rect x="1192" y="315" width="1" height="13" fill="#333" />
<path d="M1182.5,321.5 L1185,324.5 L1190,318" fill="none" stroke="#222" stroke-width="1.2"/>
<text x="1195.6" y="325.8" font-size="11" fill="#000" textLength="68" lengthAdjust="spacingAndGlyphs">Show Balloons</text>
<rect x="1180" y="334" width="13" height="13" fill="#fff" />
<rect x="1180" y="334" width="13" height="1" fill="#333" />
<rect x="1180" y="346" width="13" height="1" fill="#333" />
<rect x="1180" y="334" width="1" height="13" fill="#333" />
<rect x="1192" y="334" width="1" height="13" fill="#333" />
<text x="1195.6" y="344.8" font-size="11" fill="#000" textLength="24" lengthAdjust="spacingAndGlyphs">Snap</text>
<rect x="1180" y="378" width="13" height="13" fill="#fff" />
<rect x="1180" y="378" width="13" height="1" fill="#333" />
<rect x="1180" y="390" width="13" height="1" fill="#333" />
<rect x="1180" y="378" width="1" height="13" fill="#333" />
<rect x="1192" y="378" width="1" height="13" fill="#333" />
<path d="M1182.5,384.5 L1185,387.5 L1190,381" fill="none" stroke="#222" stroke-width="1.2"/>
<text x="1195.6" y="388.8" font-size="11" fill="#000" textLength="52" lengthAdjust="spacingAndGlyphs">Thresholds</text>
<rect x="1180" y="473" width="13" height="13" fill="#fff" />
<rect x="1180" y="473" width="13" height="1" fill="#333" />
<rect x="1180" y="485" width="13" height="1" fill="#333" />
<rect x="1180" y="473" width="1" height="13" fill="#333" />
<rect x="1192" y="473" width="1" height="13" fill="#333" />
<path d="M1182.5,479.5 L1185,482.5 L1190,476" fill="none" stroke="#222" stroke-width="1.2"/>
<text x="1195.6" y="483.8" font-size="11" fill="#000" textLength="38" lengthAdjust="spacingAndGlyphs">Auto Fit</text>
<rect x="1180" y="420" width="96" height="21" fill="#e5e5e5" />
<rect x="1180" y="420" width="96" height="1" fill="#adadad" />
<rect x="1180" y="440" width="96" height="1" fill="#adadad" />
<rect x="1180" y="420" width="1" height="21" fill="#adadad" />
<rect x="1275" y="420" width="1" height="21" fill="#adadad" />
<path d="M1262.5,428.0 L1266.5,432.0 L1270.5,428.0" fill="none" stroke="#444" stroke-width="1"/>
<text x="1183.5" y="434.5" font-size="11" fill="#000" textLength="30" lengthAdjust="spacingAndGlyphs">Linear</text>
<rect x="1180" y="490" width="96" height="21" fill="#e5e5e5" />
<rect x="1180" y="490" width="96" height="1" fill="#adadad" />
<rect x="1180" y="510" width="96" height="1" fill="#adadad" />
<rect x="1180" y="490" width="1" height="21" fill="#adadad" />
<rect x="1275" y="490" width="1" height="21" fill="#adadad" />
<path d="M1262.5,498.0 L1266.5,502.0 L1270.5,498.0" fill="none" stroke="#444" stroke-width="1"/>
<text x="1183.5" y="504.5" font-size="11" fill="#000" textLength="53" lengthAdjust="spacingAndGlyphs">Predefined</text>
<rect x="1181" y="514" width="94" height="23" fill="#e1e1e1" />
<rect x="1181" y="514" width="94" height="1" fill="#adadad" />
<rect x="1181" y="536" width="94" height="1" fill="#adadad" />
<rect x="1181" y="514" width="1" height="23" fill="#adadad" />
<rect x="1274" y="514" width="1" height="23" fill="#adadad" />
<rect x="1181" y="541" width="94" height="23" fill="#e1e1e1" />
<rect x="1181" y="541" width="94" height="1" fill="#adadad" />
<rect x="1181" y="563" width="94" height="1" fill="#adadad" />
<rect x="1181" y="541" width="1" height="23" fill="#adadad" />
<rect x="1274" y="541" width="1" height="23" fill="#adadad" />
<rect x="1181" y="568" width="94" height="23" fill="#e1e1e1" />
<rect x="1181" y="568" width="94" height="1" fill="#adadad" />
<rect x="1181" y="590" width="94" height="1" fill="#adadad" />
<rect x="1181" y="568" width="1" height="23" fill="#adadad" />
<rect x="1274" y="568" width="1" height="23" fill="#adadad" />
<text x="1219.7" y="530.3" font-size="11" fill="#000" textLength="38.6" lengthAdjust="spacingAndGlyphs">Zoom In</text>
<text x="1222.6" y="556.8" font-size="11" fill="#000" textLength="32.2" lengthAdjust="spacingAndGlyphs">Center</text>
<text x="1215.7" y="584" font-size="11" fill="#000" textLength="46.7" lengthAdjust="spacingAndGlyphs">Zoom Out</text>
<path d="M1186,533 L1191,528" stroke="#6a5010" stroke-width="4.4" stroke-linecap="round"/>
<path d="M1186,533 L1191,528" stroke="#c89a2a" stroke-width="3" stroke-linecap="round"/>
<circle cx="1195" cy="524.3" r="5.6" fill="#f4f4f8" stroke="#707070" stroke-width="1.1"/>
<circle cx="1195" cy="524.3" r="3.9" fill="#c6dcff" stroke="#a8a8b0" stroke-width="0.6"/>
<rect x="1192" y="523.3" width="6" height="2" fill="#2a6ae0" />
<rect x="1194" y="521.3" width="2" height="6" fill="#2a6ae0" />
<path d="M1186,587 L1191,582" stroke="#6a5010" stroke-width="4.4" stroke-linecap="round"/>
<path d="M1186,587 L1191,582" stroke="#c89a2a" stroke-width="3" stroke-linecap="round"/>
<circle cx="1195" cy="578.3" r="5.6" fill="#f4f4f8" stroke="#707070" stroke-width="1.1"/>
<circle cx="1195" cy="578.3" r="3.9" fill="#c6dcff" stroke="#a8a8b0" stroke-width="0.6"/>
<rect x="1192" y="577.3" width="6" height="2" fill="#2a6ae0" />
<path d="M1187.5,551 V547.5 H1191 M1195,547.5 H1198.5 V551 M1187.5,554.5 V558 H1191 M1195,558 H1198.5 V554.5" fill="none" stroke="#1e4a1e" stroke-width="1.3"/>
<path d="M1193,544 l-1,1.5 l2,1.5 l-2,1.5 l2,1.5 M1193,555.5 l-1,1.5 l2,1.5 l-2,1.5 l1,1 M1184.5,553 l1.5,-1 l1.5,2 l1.5,-2 l1.5,1 M1196.5,553 l1.5,-1 l1.5,2 l1.5,-2 l1,1" fill="none" stroke="#111" stroke-width="0.9"/>
<text x="1186.8" y="608" font-size="11" fill="#000" textLength="32" lengthAdjust="spacingAndGlyphs">X Span</text>
<text x="1186.8" y="632.5" font-size="11" fill="#000" textLength="32" lengthAdjust="spacingAndGlyphs">Y Span</text>
<rect x="1227" y="595" width="20" height="20" fill="#e1e1e1" />
<rect x="1227" y="595" width="20" height="1" fill="#adadad" />
<rect x="1227" y="614" width="20" height="1" fill="#adadad" />
<rect x="1227" y="595" width="1" height="20" fill="#adadad" />
<rect x="1246" y="595" width="1" height="20" fill="#adadad" />
<rect x="1255" y="595" width="20" height="20" fill="#e1e1e1" />
<rect x="1255" y="595" width="20" height="1" fill="#adadad" />
<rect x="1255" y="614" width="20" height="1" fill="#adadad" />
<rect x="1255" y="595" width="1" height="20" fill="#adadad" />
<rect x="1274" y="595" width="1" height="20" fill="#adadad" />
<rect x="1235" y="605" width="4" height="1" fill="#000" />
<rect x="1261" y="605" width="9" height="1" fill="#000" />
<rect x="1265" y="601" width="1" height="9" fill="#000" />
<rect x="1227" y="619" width="20" height="20" fill="#e1e1e1" />
<rect x="1227" y="619" width="20" height="1" fill="#adadad" />
<rect x="1227" y="638" width="20" height="1" fill="#adadad" />
<rect x="1227" y="619" width="1" height="20" fill="#adadad" />
<rect x="1246" y="619" width="1" height="20" fill="#adadad" />
<rect x="1255" y="619" width="20" height="20" fill="#e1e1e1" />
<rect x="1255" y="619" width="20" height="1" fill="#adadad" />
<rect x="1255" y="638" width="20" height="1" fill="#adadad" />
<rect x="1255" y="619" width="1" height="20" fill="#adadad" />
<rect x="1274" y="619" width="1" height="20" fill="#adadad" />
<rect x="1235" y="629" width="4" height="1" fill="#000" />
<rect x="1261" y="629" width="9" height="1" fill="#000" />
<rect x="1265" y="625" width="1" height="9" fill="#000" />
<rect x="1176" y="661" width="120" height="6" fill="#f7f7f7" />
<rect x="1180" y="664" width="111" height="1" fill="#b4b4b4" />
<rect x="1176" y="667" width="120" height="8" fill="#9a9a9e" />
<rect x="41" y="683" width="1263" height="59" fill="#ffffff" />
<rect x="45" y="688" width="236" height="52" fill="#000" />
<defs><linearGradient id="btng" x1="0" y1="0" x2="0" y2="1"><stop offset="0" stop-color="#d4d4d4"/><stop offset="0.5" stop-color="#b8b8b8"/><stop offset="1" stop-color="#7c7c7c"/></linearGradient></defs>
<path d="M50,690 H69 L72,693 V709 L69,712 H50 L47,709 V693 Z" fill="url(#btng)"/>
<path d="M51,701.0 L66,694.0 V708.0 Z" fill="#dcdcdc" stroke="#555" stroke-width="0.6"/>
<path d="M50,716 H69 L72,719 V735 L69,738 H50 L47,735 V719 Z" fill="url(#btng)"/>
<path d="M51,727.0 L59,720.0 V734.0 Z M58,727.0 L66,720.0 V734.0 Z" fill="#dcdcdc" stroke="#555" stroke-width="0.6"/>
<path d="M257,690 H276 L279,693 V709 L276,712 H257 L254,709 V693 Z" fill="url(#btng)"/>
<path d="M275,701.0 L260,694.0 V708.0 Z" fill="#dcdcdc" stroke="#555" stroke-width="0.6"/>
<path d="M257,716 H276 L279,719 V735 L276,738 H257 L254,735 V719 Z" fill="url(#btng)"/>
<path d="M275,727.0 L267,720.0 V734.0 Z M268,727.0 L260,720.0 V734.0 Z" fill="#dcdcdc" stroke="#555" stroke-width="0.6"/>
<g transform="translate(81.7,690) skewX(-3)"><path d="M2.8,0 L20,0 L16.2,5.2 L6.6,5.2 Z" fill="#4d4200"/><path d="M0.2,1.8 L1.6,0.6 L5.8,6 L5.8,15.6 L3,18.4 L0,17 Z" fill="#4d4200"/><path d="M22.6,1.8 L21.2,0.6 L17,6 L17,15.6 L19.8,18.4 L22.6,17 Z" fill="#4d4200"/><path d="M3.6,18.9 L6.5,16.3 L16.3,16.3 L19.2,18.9 L16.3,21.4 L6.5,21.4 Z" fill="#4d4200"/><path d="M0,20.6 L3,19.4 L5.8,22.2 L5.8,32.6 L1.6,37.8 L0.2,36.6 Z" fill="#4d4200"/><path d="M22.6,20.6 L19.8,19.4 L17,22.2 L17,32.6 L21.2,37.8 L22.6,36.6 Z" fill="#4d4200"/><path d="M6.6,33.3 L16.2,33.3 L20,38.5 L2.8,38.5 Z" fill="#4d4200"/></g>
<g transform="translate(107.5,690) skewX(-3)"><path d="M2.8,0 L20,0 L16.2,5.2 L6.6,5.2 Z" fill="#ffe600"/><path d="M0.2,1.8 L1.6,0.6 L5.8,6 L5.8,15.6 L3,18.4 L0,17 Z" fill="#ffe600"/><path d="M22.6,1.8 L21.2,0.6 L17,6 L17,15.6 L19.8,18.4 L22.6,17 Z" fill="#ffe600"/><path d="M3.6,18.9 L6.5,16.3 L16.3,16.3 L19.2,18.9 L16.3,21.4 L6.5,21.4 Z" fill="#ffe600"/><path d="M0,20.6 L3,19.4 L5.8,22.2 L5.8,32.6 L1.6,37.8 L0.2,36.6 Z" fill="#4d4200"/><path d="M22.6,20.6 L19.8,19.4 L17,22.2 L17,32.6 L21.2,37.8 L22.6,36.6 Z" fill="#ffe600"/><path d="M6.6,33.3 L16.2,33.3 L20,38.5 L2.8,38.5 Z" fill="#ffe600"/></g>
<g transform="translate(133.3,690) skewX(-3)"><path d="M2.8,0 L20,0 L16.2,5.2 L6.6,5.2 Z" fill="#4d4200"/><path d="M0.2,1.8 L1.6,0.6 L5.8,6 L5.8,15.6 L3,18.4 L0,17 Z" fill="#ffe600"/><path d="M22.6,1.8 L21.2,0.6 L17,6 L17,15.6 L19.8,18.4 L22.6,17 Z" fill="#ffe600"/><path d="M3.6,18.9 L6.5,16.3 L16.3,16.3 L19.2,18.9 L16.3,21.4 L6.5,21.4 Z" fill="#ffe600"/><path d="M0,20.6 L3,19.4 L5.8,22.2 L5.8,32.6 L1.6,37.8 L0.2,36.6 Z" fill="#4d4200"/><path d="M22.6,20.6 L19.8,19.4 L17,22.2 L17,32.6 L21.2,37.8 L22.6,36.6 Z" fill="#ffe600"/><path d="M6.6,33.3 L16.2,33.3 L20,38.5 L2.8,38.5 Z" fill="#4d4200"/></g>
<rect x="156" y="723.3" width="6" height="5.4" fill="#ffe600" style="shape-rendering:auto"/>
<g transform="translate(166.5,690) skewX(-3)"><path d="M2.8,0 L20,0 L16.2,5.2 L6.6,5.2 Z" fill="#ffe600"/><path d="M0.2,1.8 L1.6,0.6 L5.8,6 L5.8,15.6 L3,18.4 L0,17 Z" fill="#ffe600"/><path d="M22.6,1.8 L21.2,0.6 L17,6 L17,15.6 L19.8,18.4 L22.6,17 Z" fill="#ffe600"/><path d="M3.6,18.9 L6.5,16.3 L16.3,16.3 L19.2,18.9 L16.3,21.4 L6.5,21.4 Z" fill="#ffe600"/><path d="M0,20.6 L3,19.4 L5.8,22.2 L5.8,32.6 L1.6,37.8 L0.2,36.6 Z" fill="#ffe600"/><path d="M22.6,20.6 L19.8,19.4 L17,22.2 L17,32.6 L21.2,37.8 L22.6,36.6 Z" fill="#ffe600"/><path d="M6.6,33.3 L16.2,33.3 L20,38.5 L2.8,38.5 Z" fill="#ffe600"/></g>
<g transform="translate(191.6,690) skewX(-3)"><path d="M2.8,0 L20,0 L16.2,5.2 L6.6,5.2 Z" fill="#ffe600"/><path d="M0.2,1.8 L1.6,0.6 L5.8,6 L5.8,15.6 L3,18.4 L0,17 Z" fill="#ffe600"/><path d="M22.6,1.8 L21.2,0.6 L17,6 L17,15.6 L19.8,18.4 L22.6,17 Z" fill="#ffe600"/><path d="M3.6,18.9 L6.5,16.3 L16.3,16.3 L19.2,18.9 L16.3,21.4 L6.5,21.4 Z" fill="#4d4200"/><path d="M0,20.6 L3,19.4 L5.8,22.2 L5.8,32.6 L1.6,37.8 L0.2,36.6 Z" fill="#ffe600"/><path d="M22.6,20.6 L19.8,19.4 L17,22.2 L17,32.6 L21.2,37.8 L22.6,36.6 Z" fill="#ffe600"/><path d="M6.6,33.3 L16.2,33.3 L20,38.5 L2.8,38.5 Z" fill="#ffe600"/></g>
<circle cx="226.5" cy="698.5" r="8.6" fill="#ffe600"/><circle cx="239.5" cy="698.5" r="8.6" fill="#ffe600"/>
<g fill="none" stroke="#000" stroke-width="0.8"><path d="M226.5,698.5 m-6.5,0 a6.5,6.5 0 1 1 13,0"/><path d="M226.5,698.5 m-4.5,0 a4.5,4.5 0 1 1 9,0"/><path d="M239.5,698.5 m-6.5,0 a6.5,6.5 0 1 0 13,0"/><path d="M239.5,698.5 m-4.5,0 a4.5,4.5 0 1 0 9,0"/><path d="M233,698.5 a6.5,6.5 0 0 0 13,0"/><path d="M233,698.5 a6.5,6.5 0 0 1 13,0" stroke-width="0.6"/></g>
<circle cx="227" cy="699" r="1.4" fill="#000"/><circle cx="239" cy="699" r="1.4" fill="#000"/>
<g fill="none" stroke="#ffe600" stroke-width="1.9"><circle cx="226.8" cy="719.5" r="8.5"/><circle cx="239.2" cy="719.5" r="8.5"/></g>
<rect x="78" y="731" width="27" height="7" fill="#3c3300" />
<text x="79" y="737" font-size="7.6" fill="#ffe600" textLength="24.5" lengthAdjust="spacingAndGlyphs" font-weight="bold" font-family="Liberation Mono">DEEMPH</text>
<rect x="106" y="731" width="16" height="7" fill="#ffe600" />
<text x="107" y="737" font-size="7.6" fill="#000" textLength="14" lengthAdjust="spacingAndGlyphs" font-weight="bold" font-family="Liberation Mono">FLAT</text>
<rect x="127" y="731" width="20" height="7" fill="#3c3300" />
<text x="128" y="737" font-size="7.6" fill="#ffe600" textLength="18" lengthAdjust="spacingAndGlyphs" font-weight="bold" font-family="Liberation Mono">IFBW</text>
<rect x="148" y="731" width="19" height="7" fill="#ffe600" />
<text x="149" y="737" font-size="7.6" fill="#000" textLength="17" lengthAdjust="spacingAndGlyphs" font-weight="bold" font-family="Liberation Mono">WIDE</text>
<rect x="172" y="731" width="26" height="7" fill="#3c3300" />
<text x="173.5" y="737" font-size="7.6" fill="#ffe600" textLength="23.5" lengthAdjust="spacingAndGlyphs" font-weight="bold" font-family="Liberation Mono">QUALITY</text>
<rect x="199" y="731" width="4" height="7" fill="#ffe600" />
<rect x="204" y="731" width="4" height="7" fill="#ffe600" />
<rect x="209" y="731" width="4" height="7" fill="#ffe600" />
<rect x="214" y="731" width="4" height="7" fill="#ffe600" />
<rect x="219" y="731" width="4" height="7" fill="#6e5e00" />
<rect x="224" y="731" width="4" height="7" fill="#6e5e00" />
<rect x="229" y="731" width="4" height="7" fill="#6e5e00" />
<rect x="234" y="731" width="4" height="7" fill="#6e5e00" />
<rect x="239" y="731" width="4" height="7" fill="#6e5e00" />
<rect x="244" y="731" width="4" height="7" fill="#6e5e00" />
<rect x="287" y="690" width="63" height="21" fill="#ffffff" />
<rect x="287" y="690" width="63" height="1" fill="#7a7a7a" />
<rect x="287" y="710" width="63" height="1" fill="#7a7a7a" />
<rect x="287" y="690" width="1" height="21" fill="#7a7a7a" />
<rect x="349" y="690" width="1" height="21" fill="#7a7a7a" />
<text x="328.3" y="704" font-size="11" fill="#000" text-anchor="end">94.80</text>
<rect x="332" y="693" width="15" height="7" fill="#ececec" />
<rect x="332" y="693" width="15" height="1" fill="#c8c8c8" />
<rect x="332" y="699" width="15" height="1" fill="#c8c8c8" />
<rect x="332" y="693" width="1" height="7" fill="#c8c8c8" />
<rect x="346" y="693" width="1" height="7" fill="#c8c8c8" />
<rect x="332" y="701" width="15" height="8" fill="#e4e4e4" />
<rect x="332" y="701" width="15" height="1" fill="#c8c8c8" />
<rect x="332" y="708" width="15" height="1" fill="#c8c8c8" />
<rect x="332" y="701" width="1" height="8" fill="#c8c8c8" />
<rect x="346" y="701" width="1" height="8" fill="#c8c8c8" />
<path d="M336,698 L339.5,694.5 L343,698 Z M336,702.5 L339.5,706 L343,702.5 Z" fill="#000"/>
<text x="353" y="704" font-size="11" fill="#000" textLength="21" lengthAdjust="spacingAndGlyphs">MHz</text>
<rect x="379" y="689" width="38" height="22" fill="#e1e1e1" />
<rect x="379" y="689" width="38" height="1" fill="#adadad" />
<rect x="379" y="710" width="38" height="1" fill="#adadad" />
<rect x="379" y="689" width="1" height="22" fill="#adadad" />
<rect x="416" y="689" width="1" height="22" fill="#adadad" />
<text x="397.5" y="704" font-size="11" fill="#000" text-anchor="middle">Set</text>
<text x="286.5" y="731" font-size="11" fill="#000" textLength="33" lengthAdjust="spacingAndGlyphs">Region</text>
<rect x="326" y="717" width="92" height="21" fill="#e5e5e5" />
<rect x="326" y="717" width="92" height="1" fill="#adadad" />
<rect x="326" y="737" width="92" height="1" fill="#adadad" />
<rect x="326" y="717" width="1" height="21" fill="#adadad" />
<rect x="417" y="717" width="1" height="21" fill="#adadad" />
<path d="M404.5,725.0 L408.5,729.0 L412.5,725.0" fill="none" stroke="#444" stroke-width="1"/>
<text x="329.5" y="731.5" font-size="11" fill="#000" textLength="38" lengthAdjust="spacingAndGlyphs">General</text>
<rect x="422" y="689" width="64" height="22" fill="#f0f0f0" />
<rect x="422" y="689" width="64" height="1" fill="#6a6a6a" />
<rect x="422" y="710" width="64" height="1" fill="#6a6a6a" />
<rect x="422" y="689" width="1" height="22" fill="#6a6a6a" />
<rect x="485" y="689" width="1" height="22" fill="#6a6a6a" />
<path d="M426,694 q0,-1 1,-1 h11.5 l1.5,1.5 v11.5 q0,1 -1,1 h-12 q-1,0 -1,-1 z" fill="#3f6fe0"/>
<rect x="428" y="694" width="10" height="5" fill="#e6eeff" />
<rect x="429" y="701" width="8" height="6" fill="#d8dce4" />
<rect x="430" y="702" width="2" height="4" fill="#3058c8" />
<text x="478" y="704" font-size="11" fill="#000" text-anchor="end">91.10</text>
<rect x="488" y="689" width="64" height="22" fill="#f0f0f0" />
<rect x="488" y="689" width="64" height="1" fill="#6a6a6a" />
<rect x="488" y="710" width="64" height="1" fill="#6a6a6a" />
<rect x="488" y="689" width="1" height="22" fill="#6a6a6a" />
<rect x="551" y="689" width="1" height="22" fill="#6a6a6a" />
<path d="M492,694 q0,-1 1,-1 h11.5 l1.5,1.5 v11.5 q0,1 -1,1 h-12 q-1,0 -1,-1 z" fill="#3f6fe0"/>
<rect x="494" y="694" width="10" height="5" fill="#e6eeff" />
<rect x="495" y="701" width="8" height="6" fill="#d8dce4" />
<rect x="496" y="702" width="2" height="4" fill="#3058c8" />
<text x="544" y="704" font-size="11" fill="#000" text-anchor="end">95.70</text>
<rect x="554" y="689" width="64" height="22" fill="#f0f0f0" />
<rect x="554" y="689" width="64" height="1" fill="#6a6a6a" />
<rect x="554" y="710" width="64" height="1" fill="#6a6a6a" />
<rect x="554" y="689" width="1" height="22" fill="#6a6a6a" />
<rect x="617" y="689" width="1" height="22" fill="#6a6a6a" />
<path d="M558,694 q0,-1 1,-1 h11.5 l1.5,1.5 v11.5 q0,1 -1,1 h-12 q-1,0 -1,-1 z" fill="#3f6fe0"/>
<rect x="560" y="694" width="10" height="5" fill="#e6eeff" />
<rect x="561" y="701" width="8" height="6" fill="#d8dce4" />
<rect x="562" y="702" width="2" height="4" fill="#3058c8" />
<text x="610" y="704" font-size="11" fill="#000" text-anchor="end">---.--</text>
<rect x="422" y="717" width="64" height="22" fill="#f0f0f0" />
<rect x="422" y="717" width="64" height="1" fill="#6a6a6a" />
<rect x="422" y="738" width="64" height="1" fill="#6a6a6a" />
<rect x="422" y="717" width="1" height="22" fill="#6a6a6a" />
<rect x="485" y="717" width="1" height="22" fill="#6a6a6a" />
<path d="M426,722 q0,-1 1,-1 h11.5 l1.5,1.5 v11.5 q0,1 -1,1 h-12 q-1,0 -1,-1 z" fill="#3f6fe0"/>
<rect x="428" y="722" width="10" height="5" fill="#e6eeff" />
<rect x="429" y="729" width="8" height="6" fill="#d8dce4" />
<rect x="430" y="730" width="2" height="4" fill="#3058c8" />
<text x="478" y="732" font-size="11" fill="#000" text-anchor="end">99.90</text>
<rect x="488" y="717" width="64" height="22" fill="#f0f0f0" />
<rect x="488" y="717" width="64" height="1" fill="#6a6a6a" />
<rect x="488" y="738" width="64" height="1" fill="#6a6a6a" />
<rect x="488" y="717" width="1" height="22" fill="#6a6a6a" />
<rect x="551" y="717" width="1" height="22" fill="#6a6a6a" />
<path d="M492,722 q0,-1 1,-1 h11.5 l1.5,1.5 v11.5 q0,1 -1,1 h-12 q-1,0 -1,-1 z" fill="#3f6fe0"/>
<rect x="494" y="722" width="10" height="5" fill="#e6eeff" />
<rect x="495" y="729" width="8" height="6" fill="#d8dce4" />
<rect x="496" y="730" width="2" height="4" fill="#3058c8" />
<text x="544" y="732" font-size="11" fill="#000" text-anchor="end">---.--</text>
<rect x="554" y="717" width="65" height="22" fill="#e5e5e5" />
<rect x="554" y="717" width="65" height="1" fill="#adadad" />
<rect x="554" y="738" width="65" height="1" fill="#adadad" />
<rect x="554" y="717" width="1" height="22" fill="#adadad" />
<rect x="618" y="717" width="1" height="22" fill="#adadad" />
<path d="M605.5,725.5 L609.5,729.5 L613.5,725.5" fill="none" stroke="#444" stroke-width="1"/>
<text x="557.5" y="732.0" font-size="11" fill="#000" textLength="25" lengthAdjust="spacingAndGlyphs">More</text>
<rect x="621" y="689" width="47" height="22" fill="#cce4f7" />
<rect x="621" y="689" width="47" height="1" fill="#0078d7" />
<rect x="621" y="710" width="47" height="1" fill="#0078d7" />
<rect x="621" y="689" width="1" height="22" fill="#0078d7" />
<rect x="667" y="689" width="1" height="22" fill="#0078d7" />
<rect x="630" y="694" width="6" height="13" fill="#00c800" />
<rect x="630" y="694" width="6" height="1" fill="#2a5a2a" />
<rect x="630" y="706" width="6" height="1" fill="#2a5a2a" />
<rect x="630" y="694" width="1" height="13" fill="#2a5a2a" />
<rect x="635" y="694" width="1" height="13" fill="#2a5a2a" />
<text x="641" y="704" font-size="11" fill="#000" textLength="19.6" lengthAdjust="spacingAndGlyphs">ANT</text>
<rect x="621" y="717" width="47" height="22" fill="#e1e1e1" />
<rect x="621" y="717" width="47" height="1" fill="#adadad" />
<rect x="621" y="738" width="47" height="1" fill="#adadad" />
<rect x="621" y="717" width="1" height="22" fill="#adadad" />
<rect x="667" y="717" width="1" height="22" fill="#adadad" />
<rect x="630" y="721" width="6" height="14" fill="#707070" />
<text x="641" y="732" font-size="11" fill="#000" textLength="19.6" lengthAdjust="spacingAndGlyphs">MPX</text>
<g transform="translate(747,697) scale(1.0)"><path fill-rule="evenodd" fill="#0038a8" d="M0,0 H80 C85,0 88,3.5 88,7.8 C88,11.5 86,14 84,15.5 C86,17 88,19.5 88,23.2 C88,27.5 85,31 80,31 H0 Z M5,6 H43 V25 H5 Z M10,10.7 H36 A4.5,4.5 0 0 1 36,19.7 H10 Z M50,6 H80 A3,3 0 0 1 80,12 H50 Z M50,18.6 H80 A3.2,3.2 0 0 1 80,25 H50 Z"/><text x="96" y="20" font-size="27" font-weight="bold" fill="#0038a8" textLength="102" lengthAdjust="spacingAndGlyphs">DEVA</text><text x="96" y="31" font-size="8.5" font-weight="bold" fill="#0038a8" textLength="108.6" lengthAdjust="spacingAndGlyphs">BROADCAST</text><circle cx="201" cy="5.5" r="3.3" fill="none" stroke="#0038a8" stroke-width="1"/><text x="201" y="7.3" font-size="5" font-weight="bold" fill="#0038a8" text-anchor="middle">R</text></g>
<g transform="translate(989,217) scale(0.675)"><path fill-rule="evenodd" fill="#0038a8" d="M0,0 H80 C85,0 88,3.5 88,7.8 C88,11.5 86,14 84,15.5 C86,17 88,19.5 88,23.2 C88,27.5 85,31 80,31 H0 Z M5,6 H43 V25 H5 Z M10,10.7 H36 A4.5,4.5 0 0 1 36,19.7 H10 Z M50,6 H80 A3,3 0 0 1 80,12 H50 Z M50,18.6 H80 A3.2,3.2 0 0 1 80,25 H50 Z"/><text x="96" y="20" font-size="27" font-weight="bold" fill="#0038a8" textLength="102" lengthAdjust="spacingAndGlyphs">DEVA</text><text x="96" y="31" font-size="8.5" font-weight="bold" fill="#0038a8" textLength="108.6" lengthAdjust="spacingAndGlyphs">BROADCAST</text><circle cx="201" cy="5.5" r="3.3" fill="none" stroke="#0038a8" stroke-width="1"/><text x="201" y="7.3" font-size="5" font-weight="bold" fill="#0038a8" text-anchor="middle">R</text></g>
<rect x="1032" y="687" width="52" height="23" fill="#e1e1e1" />
<rect x="1032" y="687" width="52" height="1" fill="#adadad" />
<rect x="1032" y="709" width="52" height="1" fill="#adadad" />
<rect x="1032" y="687" width="1" height="23" fill="#adadad" />
<rect x="1083" y="687" width="1" height="23" fill="#adadad" />
<circle cx="1043.4" cy="699" r="6.6" fill="none" stroke="#111" stroke-width="1.1"/>
<path d="M1041.5,695.5 L1046.5,699 L1041.5,702.5 Z" fill="#118811"/>
<text x="1058.5" y="702.5" font-size="11" fill="#000" textLength="21" lengthAdjust="spacingAndGlyphs">Play</text>
<path d="M1093,695 h3 l5,-4 v15 l-5,-4 h-3 z" fill="#f0d000" stroke="#000" stroke-width="1"/>
<path d="M1102.5,694.5 q2,4 0,8 M1104.5,692.5 q3,6 0,12" fill="none" stroke="#000" stroke-width="0.9"/>
<rect x="1113" y="697" width="95" height="3" fill="#e6e6e6" />
<rect x="1113" y="697" width="95" height="1" fill="#d6d6d6" />
<rect x="1113" y="699" width="95" height="1" fill="#d6d6d6" />
<rect x="1113" y="697" width="1" height="3" fill="#d6d6d6" />
<rect x="1207" y="697" width="1" height="3" fill="#d6d6d6" />
<path d="M1198,690 h11 v14 l-5.5,5 l-5.5,-5 z" fill="#0078d7"/>
<text x="1218" y="702" font-size="11" fill="#000" textLength="30.5" lengthAdjust="spacingAndGlyphs">100 %</text>
<rect x="1256" y="687" width="46" height="23" fill="#e1e1e1" />
<rect x="1256" y="687" width="46" height="1" fill="#adadad" />
<rect x="1256" y="709" width="46" height="1" fill="#adadad" />
<rect x="1256" y="687" width="1" height="23" fill="#adadad" />
<rect x="1301" y="687" width="1" height="23" fill="#adadad" />
<defs><radialGradient id="recg" cx="0.4" cy="0.35" r="0.7"><stop offset="0" stop-color="#c8c8c8"/><stop offset="1" stop-color="#3a3a3a"/></radialGradient></defs>
<circle cx="1265.5" cy="698.5" r="5" fill="url(#recg)"/>
<text x="1273" y="703" font-size="11" fill="#000" textLength="22" lengthAdjust="spacingAndGlyphs">REC</text>
<rect x="1031" y="717" width="137" height="21" fill="#e5e5e5" />
<rect x="1031" y="717" width="137" height="1" fill="#adadad" />
<rect x="1031" y="737" width="137" height="1" fill="#adadad" />
<rect x="1031" y="717" width="1" height="21" fill="#adadad" />
<rect x="1167" y="717" width="1" height="21" fill="#adadad" />
<path d="M1154.5,725.0 L1158.5,729.0 L1162.5,725.0" fill="none" stroke="#444" stroke-width="1"/>
<text x="1034.5" y="731.5" font-size="11" fill="#000" textLength="100.5" lengthAdjust="spacingAndGlyphs">Primary Sound Driver</text>
<rect x="1175" y="717" width="73" height="22" fill="#e1e1e1" />
<rect x="1175" y="717" width="73" height="1" fill="#adadad" />
<rect x="1175" y="738" width="73" height="1" fill="#adadad" />
<rect x="1175" y="717" width="1" height="22" fill="#adadad" />
<rect x="1247" y="717" width="1" height="22" fill="#adadad" />
<g transform="translate(1187.5,727.5)"><circle r="5.6" fill="none" stroke="#444" stroke-width="2" stroke-dasharray="2 1.5"/><circle r="4.4" fill="#e1e1e1" stroke="#444" stroke-width="1"/><circle r="2" fill="none" stroke="#444" stroke-width="1"/></g>
<text x="1202.5" y="732" font-size="11" fill="#000" textLength="38.5" lengthAdjust="spacingAndGlyphs">Settings</text>
<rect x="1256" y="717" width="46" height="22" fill="#e1e1e1" />
<rect x="1256" y="717" width="46" height="1" fill="#adadad" />
<rect x="1256" y="738" width="46" height="1" fill="#adadad" />
<rect x="1256" y="717" width="1" height="22" fill="#adadad" />
<rect x="1301" y="717" width="1" height="22" fill="#adadad" />
<text x="1261" y="732" font-size="11" fill="#000" textLength="33" lengthAdjust="spacingAndGlyphs">Replay</text>
<rect x="41" y="742" width="1263" height="1" fill="#d7d7d7" />
<rect x="41" y="743" width="1263" height="17" fill="#f0f0f0" />
<rect x="711" y="745" width="1" height="14" fill="#c8c8c8" />
<rect x="772" y="745" width="1" height="14" fill="#c8c8c8" />
<rect x="919" y="745" width="1" height="14" fill="#c8c8c8" />
<rect x="1007" y="745" width="1" height="14" fill="#c8c8c8" />
<rect x="1117" y="745" width="1" height="14" fill="#c8c8c8" />
<rect x="1177" y="745" width="1" height="14" fill="#c8c8c8" />
<text x="763" y="756.5" font-size="11.5" fill="#000" text-anchor="end">00:01:14</text>
<text x="780.3" y="756.5" font-size="11.5" fill="#000" textLength="129.3" lengthAdjust="spacingAndGlyphs">FW: 1.2.1560  26-06-2017</text>
<text x="927.3" y="756.5" font-size="11.5" fill="#000" textLength="69.6" lengthAdjust="spacingAndGlyphs">SN: BS2N81FC</text>
<text x="1015.5" y="756.5" font-size="11.5" fill="#000" textLength="92.4" lengthAdjust="spacingAndGlyphs">Ver: 2.1.0.278 x64</text>
<text x="1125.3" y="756.5" font-size="11.5" fill="#000" textLength="42" lengthAdjust="spacingAndGlyphs">SSE: Yes</text>
<text x="1185.5" y="756.5" font-size="11.5" fill="#000" textLength="109" lengthAdjust="spacingAndGlyphs">Cal: 08-17-2023 11:32</text>
<rect x="1301" y="751" width="2" height="2" fill="#b8b8b8" />
<rect x="1298" y="754" width="2" height="2" fill="#b8b8b8" />
<rect x="1301" y="754" width="2" height="2" fill="#b8b8b8" />
<rect x="1295" y="757" width="2" height="2" fill="#b8b8b8" />
<rect x="1298" y="757" width="2" height="2" fill="#b8b8b8" />
<rect x="1301" y="757" width="2" height="2" fill="#b8b8b8" />
</svg></body></html>
